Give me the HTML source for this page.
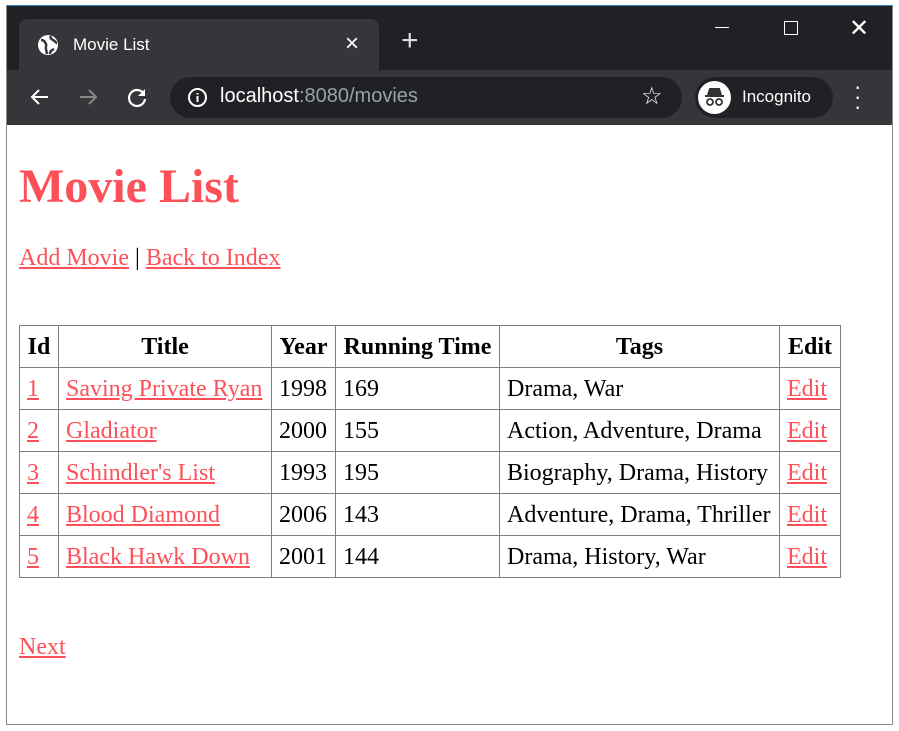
<!DOCTYPE html>
<html><head><meta charset="utf-8"><style>
body{margin:0;width:899px;height:731px;background:#fff;position:relative;overflow:hidden;font-family:"Liberation Serif",serif}
.win{position:absolute;left:6px;top:5px;width:887px;height:720px;border:1px solid #8a8a8a;border-top:1px solid #3b82c4;box-sizing:border-box;background:#fff}
.tabs{position:absolute;left:0;top:0;width:100%;height:64px;background:#202124}
.tab{position:absolute;left:12px;top:13px;width:360px;height:56px;background:#35363a;border-radius:8px 8px 0 0;color:#fff;font:17px "Liberation Sans",sans-serif}
.bar{position:absolute;left:0;top:64px;width:100%;height:55px;background:#35363a}
.url{position:absolute;left:163px;top:7px;width:512px;height:41px;background:#202124;border-radius:21px;font:20px "Liberation Sans",sans-serif;color:#fff}
.inc{position:absolute;left:688px;top:7px;width:138px;height:41px;background:#202124;border-radius:21px;color:#fff;font:17px "Liberation Sans",sans-serif}
.page{position:absolute;left:0;top:119px;width:100%;bottom:0;padding:0 12px;box-sizing:border-box}
h1{color:#fd5059;font-size:48px;margin:34px 0 0;line-height:55px}
a{color:#fd5059}
.nav{font-size:24px;margin-top:30px;line-height:28px}
table{border-collapse:collapse;margin-top:53px;font-size:24px}
td,th{border:1px solid #808080;height:41px;padding:0 7px;white-space:nowrap;line-height:28px}
th{text-align:center}
.next{font-size:24px;margin-top:56px}
</style></head><body>
<div class="win">
<div class="tabs">
<div class="tab"><svg style="position:absolute;left:18px;top:15px" width="22" height="22" viewBox="0 0 22 22"><circle cx="11" cy="11" r="10" fill="#fff"/><path d="M4 6c3 0 4 2 5 4s-1 3 0 5l1 5M14 2c-1 2 0 3 2 4s3 3 4 3M13 20c0-3 2-4 4-5" stroke="#35363a" stroke-width="2.5" fill="none"/></svg><span style="position:absolute;left:54px;top:16px">Movie List</span><span style="position:absolute;left:326px;top:11px;font-size:24px">×</span></div>
<span style="position:absolute;left:394px;top:20px;color:#ddd;font:30px 'Liberation Sans',sans-serif;line-height:30px">+</span>
<div style="position:absolute;left:708px;top:21px;width:14px;border-top:1px solid #fff"></div>
<div style="position:absolute;left:777px;top:15px;width:12px;height:12px;border:1px solid #fff"></div>
<span style="position:absolute;left:842px;top:8px;color:#fff;font:24px 'Liberation Sans',sans-serif">✕</span>
</div>
<div class="bar">
<svg style="position:absolute;left:22px;top:16px" width="22" height="22" viewBox="0 0 22 22"><path d="M19 11H4M10 4l-7 7 7 7" stroke="#fff" stroke-width="2" fill="none"/></svg>
<svg style="position:absolute;left:70px;top:16px" width="22" height="22" viewBox="0 0 22 22"><path d="M3 11h15M12 4l7 7-7 7" stroke="#888" stroke-width="2" fill="none"/></svg>
<svg style="position:absolute;left:119px;top:16px" width="22" height="22" viewBox="0 0 22 22"><path d="M18 8A8 8 0 1 0 19 13" stroke="#fff" stroke-width="2.2" fill="none"/><path d="M19 3v7h-7z" fill="#fff"/></svg>
<div class="url"><svg style="position:absolute;left:17px;top:10px" width="21" height="21" viewBox="0 0 21 21"><circle cx="10.5" cy="10.5" r="8.5" stroke="#fff" stroke-width="2" fill="none"/><path d="M10.5 9v6M10.5 6v1.5" stroke="#fff" stroke-width="2"/></svg><span style="position:absolute;left:50px;top:8px">localhost<span style="color:#9aa0a6">:8080/movies</span></span><span style="position:absolute;left:471px;top:5px;font-size:24px">☆</span></div>
<div class="inc"><svg style="position:absolute;left:3px;top:4px" width="33" height="33" viewBox="0 0 33 33"><circle cx="16.5" cy="16.5" r="16.5" fill="#fff"/><path d="M7 15h19M10 14l2-6h9l2 6" stroke="#333" stroke-width="2" fill="#333"/><circle cx="12" cy="21" r="3" stroke="#333" stroke-width="1.8" fill="none"/><circle cx="21" cy="21" r="3" stroke="#333" stroke-width="1.8" fill="none"/></svg><span style="position:absolute;left:47px;top:10px">Incognito</span></div>
<span style="position:absolute;left:847px;top:12px;color:#fff;font:22px 'Liberation Sans',sans-serif;line-height:10px;width:6px;text-align:center">·<br>·<br>·</span>
</div>
<div class="page">
<h1>Movie List</h1>
<div class="nav"><a href="#">Add Movie</a> | <a href="#">Back to Index</a></div>
<table>
<tr><th style="width:24px">Id</th><th style="width:198px">Title</th><th style="width:49px">Year</th><th style="width:149px">Running Time</th><th style="width:265px">Tags</th><th style="width:46px">Edit</th></tr>
<tr><td><a href="#">1</a></td><td><a href="#">Saving Private Ryan</a></td><td>1998</td><td>169</td><td>Drama, War</td><td><a href="#">Edit</a></td></tr>
<tr><td><a href="#">2</a></td><td><a href="#">Gladiator</a></td><td>2000</td><td>155</td><td>Action, Adventure, Drama</td><td><a href="#">Edit</a></td></tr>
<tr><td><a href="#">3</a></td><td><a href="#">Schindler's List</a></td><td>1993</td><td>195</td><td>Biography, Drama, History</td><td><a href="#">Edit</a></td></tr>
<tr><td><a href="#">4</a></td><td><a href="#">Blood Diamond</a></td><td>2006</td><td>143</td><td>Adventure, Drama, Thriller</td><td><a href="#">Edit</a></td></tr>
<tr><td><a href="#">5</a></td><td><a href="#">Black Hawk Down</a></td><td>2001</td><td>144</td><td>Drama, History, War</td><td><a href="#">Edit</a></td></tr>
</table>
<div class="next"><a href="#">Next</a></div>
</div>
</div>
</body></html>
